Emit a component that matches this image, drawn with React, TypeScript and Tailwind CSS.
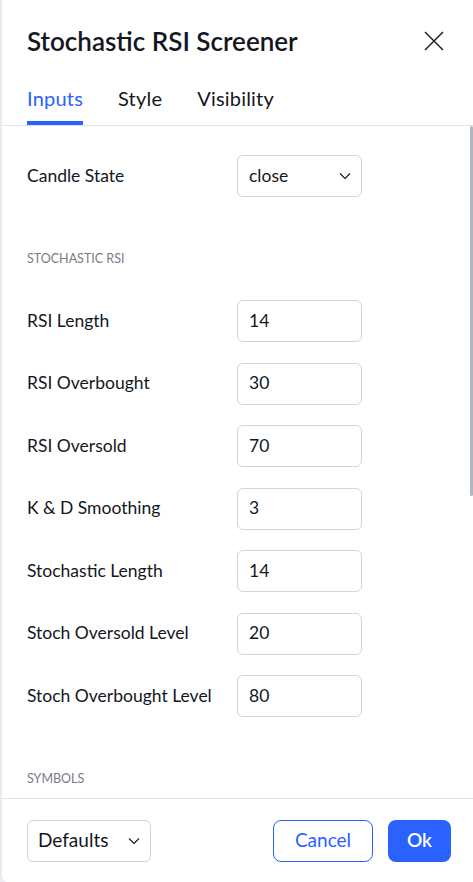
import React from 'react';

const ROWS: { label: string; value: string }[] = [
  { label: 'RSI Length', value: '14' },
  { label: 'RSI Overbought', value: '30' },
  { label: 'RSI Oversold', value: '70' },
  { label: 'K & D Smoothing', value: '3' },
  { label: 'Stochastic Length', value: '14' },
  { label: 'Stoch Oversold Level', value: '20' },
  { label: 'Stoch Overbought Level', value: '80' },
];

const Chevron = () => (
  <svg width="12" height="8" viewBox="0 0 12 8" fill="none" className="text-[#131722]">
    <path d="M1 1.5l5 5 5-5" stroke="currentColor" strokeWidth="1.1" />
  </svg>
);

const FieldRow = ({ label, children }: { label: string; children: React.ReactNode }) => (
  <div className="flex items-center h-[42px]">
    <div className="w-[210px] text-[17.5px] text-[#131722]">{label}</div>
    {children}
  </div>
);

export default function App() {
  return (
    <div
      className="w-[473px] h-[882px] bg-[#e9ebf0] pl-[2px] overflow-hidden"
      style={{ fontFamily: 'Lato, "Liberation Sans", sans-serif' }}
    >
      <div className="relative h-full bg-white rounded-bl-[6px] flex flex-col">
        {/* header */}
        <div className="mt-[12px] h-[58px] flex items-center justify-between pl-[25px] pr-[29px]">
          <h1 className="text-[26px] font-semibold text-[#131722]">Stochastic RSI Screener</h1>
          <button className="w-[20px] h-[20px] flex items-center justify-center text-[#131722]">
            <svg width="20" height="20" viewBox="0 0 20 20" fill="none">
              <path d="M1 1l18 18M19 1L1 19" stroke="currentColor" strokeWidth="1.4" />
            </svg>
          </button>
        </div>

        {/* tabs */}
        <div className="h-[56px] border-b border-[#e0e3eb] flex pl-[25px] gap-[35px]">
          {['Inputs', 'Style', 'Visibility'].map((t, i) => (
            <div
              key={t}
              className={`relative h-full flex items-center text-[20px] tracking-[0.2px] ${i === 0 ? 'text-[#2962ff]' : 'text-[#131722]'}`}
            >
              {t}
              {i === 0 && <div className="absolute left-0 right-0 bottom-0 h-[4px] bg-[#2962ff]" />}
            </div>
          ))}
        </div>

        {/* scroll body */}
        <div className="relative flex-1 overflow-hidden pl-[25px] pt-[29px]">
          <FieldRow label="Candle State">
            <div className="w-[125px] h-[42px] border border-[#d1d4dc] rounded-[6px] flex items-center justify-between pl-[11px] pr-[10px] text-[17.5px] text-[#131722]">
              close
              <Chevron />
            </div>
          </FieldRow>

          <div className="mt-[52px] mb-[31px] h-[20px] flex items-center text-[12.5px] text-[#787b86]">STOCHASTIC RSI</div>

          <div className="flex flex-col gap-[20.5px]">
            {ROWS.map((r) => (
              <FieldRow key={r.label} label={r.label}>
                <div className="w-[125px] h-[42px] border border-[#d1d4dc] rounded-[6px] flex items-center pl-[11px] text-[17.5px] text-[#131722]">
                  {r.value}
                </div>
              </FieldRow>
            ))}
          </div>

          <div className="mt-[52px] h-[20px] flex items-center text-[12.5px] text-[#787b86]">SYMBOLS</div>

          {/* scrollbar thumb */}
          <div className="absolute right-0 top-0 w-[3px] h-[370px] rounded-full bg-[#b2b5be]" />
        </div>

        {/* footer */}
        <div className="h-[84px] border-t border-[#e0e3eb] flex items-center justify-between pl-[25px] pr-[22px]">
          <div className="w-[124px] h-[42px] border border-[#d1d4dc] rounded-[6px] flex items-center justify-between pl-[10px] pr-[10px] text-[19px] text-[#131722]">
            Defaults
            <Chevron />
          </div>
          <div className="flex gap-[15px]">
            <button className="w-[100px] h-[42px] border border-[#2962ff] rounded-[8px] text-[19px] text-[#2962ff] bg-white">
              Cancel
            </button>
            <button className="w-[63px] h-[42px] rounded-[8px] text-[19px] font-semibold text-white bg-[#2962ff]">
              Ok
            </button>
          </div>
        </div>
      </div>
    </div>
  );
}
